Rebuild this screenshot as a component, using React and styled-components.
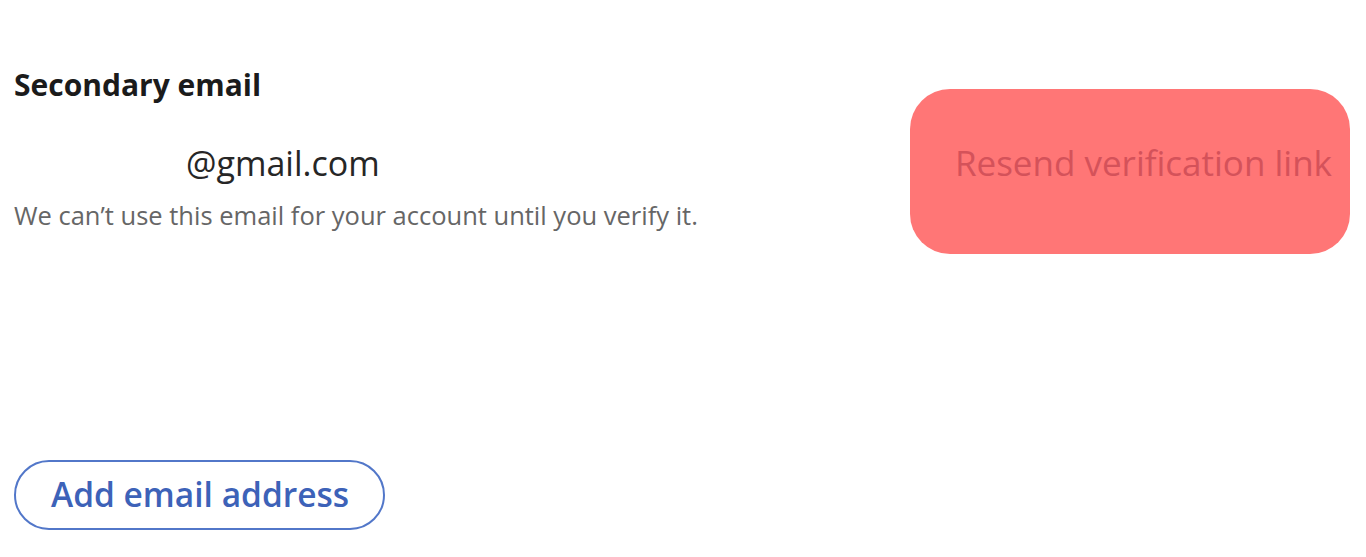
import React from "react";
import styled, { createGlobalStyle } from "styled-components";

const Global = createGlobalStyle`
  html, body { margin: 0; padding: 0; background: #ffffff; }
  body { font-family: "Open Sans", "Noto Sans", sans-serif; }
`;

const Page = styled.div`
  width: 1366px;
  height: 557px;
  box-sizing: border-box;
  padding: 62px 16px 0 14px;
  display: flex;
  flex-direction: column;
`;

const Row = styled.div`
  display: flex;
  justify-content: space-between;
  align-items: flex-start;
`;

const Info = styled.div`
  display: flex;
  flex-direction: column;
`;

const Heading = styled.h2`
  margin: 0;
  font-size: 30px;
  font-weight: 700;
  color: #1b1b1b;
  line-height: 46px;
`;

const Email = styled.div`
  margin: 34px 0 0 172px;
  font-size: 34px;
  color: #262626;
  line-height: 42px;
`;

const Note = styled.p`
  margin: 14px 0 0;
  font-size: 25.5px;
  color: #666666;
  line-height: 34px;
`;

const ResendButton = styled.button`
  margin-top: 27px;
  width: 440px;
  height: 165px;
  border: none;
  border-radius: 40px;
  background: #ff7676;
  color: #d4525a;
  font-family: inherit;
  font-size: 35px;
  font-weight: 400;
  text-align: right;
  padding: 0 18px 18px 0;
  cursor: pointer;
`;

const AddButton = styled.button`
  margin-top: 206px;
  align-self: flex-start;
  height: 70px;
  padding: 0 34px 2px 35px;
  border: 2px solid #5277c9;
  border-radius: 35px;
  background: #fff;
  color: #3d62b8;
  font-family: inherit;
  font-size: 33.5px;
  font-weight: 600;
  cursor: pointer;
`;

export default function App() {
  return (
    <>
      <Global />
      <Page>
        <Row>
          <Info>
            <Heading>Secondary email</Heading>
            <Email>@gmail.com</Email>
            <Note>We can’t use this email for your account until you verify it.</Note>
          </Info>
          <ResendButton>Resend verification link</ResendButton>
        </Row>
        <AddButton>Add email address</AddButton>
      </Page>
    </>
  );
}
